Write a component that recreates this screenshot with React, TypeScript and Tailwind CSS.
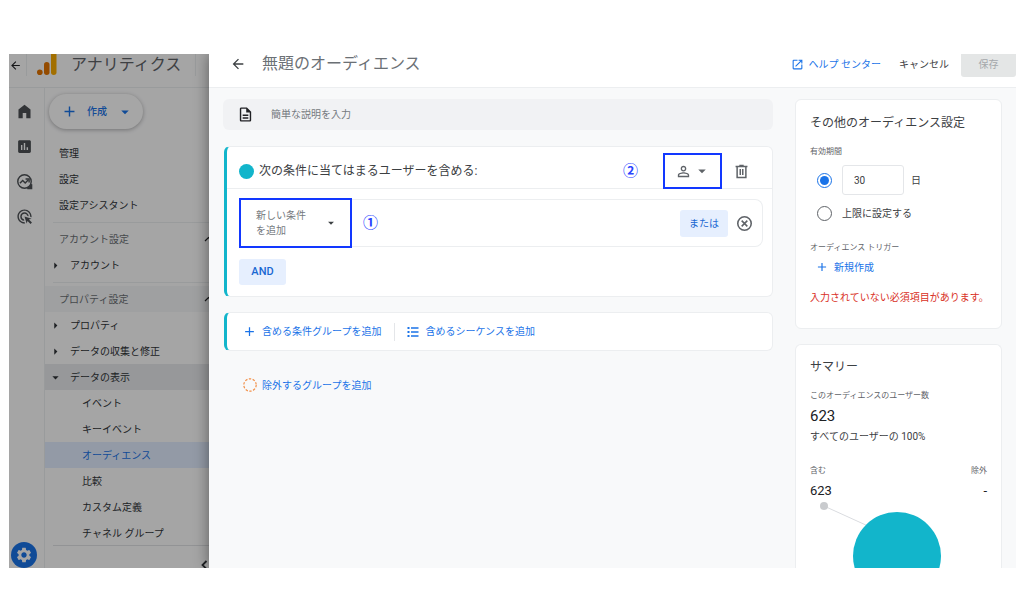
import { useState } from 'react';
import {
  MdAdd,
  MdAdsClick,
  MdArrowBack,
  MdArrowDropDown,
  MdArrowRight,
  MdAssessment,
  MdOpenInNew,
  MdOutlineDescription,
  MdPersonOutline,
  MdSettings,
} from 'react-icons/md';

const displayItems = [
  'イベント',
  'キーイベント',
  'オーディエンス',
  '比較',
  'カスタム定義',
  'チャネル グループ',
];

function Logo() {
  return (
    <svg width="20" height="22" viewBox="0 0 20 22" aria-hidden="true">
      <rect x="14" y="-2" width="5.5" height="23" rx="2.75" fill="#f9ab00" />
      <rect x="7" y="8" width="5.5" height="13" rx="2.75" fill="#e37400" />
      <circle cx="2.8" cy="18.2" r="2.8" fill="#e37400" />
    </svg>
  );
}

function HomeIcon() {
  return (
    <svg width="17" height="17" viewBox="0 0 24 24" fill="currentColor" aria-hidden="true">
      <path d="M3.5 21.5V9L12 2.5 20.500 9v12.500h-6v-7.500h-5v7.500z" />
    </svg>
  );
}

function ExploreIcon() {
  return (
    <svg width="17" height="17" viewBox="0 0 24 24" fill="none" stroke="currentColor" strokeWidth="2" aria-hidden="true">
      <circle cx="12" cy="12" r="9.5" />
      <path d="M16 22h6v-6c-1 3-3 5-6 6z" fill="currentColor" />
      <path d="M5.500 14.500l4-4 3.500 3.500 4.500-4.500" />
      <path d="M13.500 8.500h5v5" />
    </svg>
  );
}

function TrashIcon() {
  return (
    <svg width="15" height="15" viewBox="0 0 24 24" fill="none" stroke="currentColor" strokeWidth="2.4" aria-hidden="true">
      <path d="M2.500 4h19M8.500 2.500h7M5 4v17.500h14V4M10 8v9.500M14 8v9.500" />
    </svg>
  );
}

function RemoveIcon() {
  return (
    <svg width="17" height="17" viewBox="0 0 24 24" fill="none" stroke="currentColor" strokeWidth="2.2" aria-hidden="true">
      <circle cx="12" cy="12" r="9.500" />
      <path d="M8 8l8 8M16 8l-8 8" />
    </svg>
  );
}

function ListIcon() {
  return (
    <svg width="12" height="12" viewBox="0 0 12 12" fill="none" stroke="currentColor" aria-hidden="true">
      <path d="M4 2h7.500M4 6h7.500M4 10h7.500" strokeWidth="1.300" />
      <path d="M.5 2h2M.5 6h2M.5 10h2" strokeWidth="1.800" />
    </svg>
  );
}

function SectionTitle({ label, shaded }: { label: string; shaded?: boolean }) {
  return (
    <button
      type="button"
      className={`flex h-[26px] w-full items-center justify-between pl-[14px] text-[#6b7075] ${shaded ? 'bg-[#f5f6f7]' : ''}`}
    >
      {label}
      <svg width="9" height="6" viewBox="0 0 9 6" fill="none" stroke="#202124" strokeWidth="1.200" className="-mr-1 shrink-0" aria-hidden="true">
        <path d="M1 5l3.500-3.500L8 5" />
      </svg>
    </button>
  );
}

function TreeItem({ label, open }: { label: string; open?: boolean }) {
  const Arrow = open ? MdArrowDropDown : MdArrowRight;
  return (
    <button
      type="button"
      aria-expanded={!!open}
      className={`flex h-[26px] w-full items-center gap-[7px] pl-[3px] ${open ? 'bg-[#e8eaed]' : ''}`}
    >
      <Arrow size={15} />
      {label}
    </button>
  );
}

function Sidebar() {
  return (
    <div className="relative flex w-[200px] shrink-0 flex-col overflow-hidden bg-[#fdfdfe]">
      <div className="flex h-[34px] shrink-0 items-start border-b border-[#eceef0] text-[#202124]">
        <button type="button" aria-label="戻る" className="flex h-[22px] w-[18px] items-center border-r border-[#eceef0]">
          <MdArrowBack size={13} />
        </button>
        <div className="ml-[10px] flex flex-1 items-start gap-[14px]">
          <Logo />
          <span className="text-[16px] leading-[22px] text-[#5f6368]">アナリティクス</span>
        </div>
        <span className="mr-[13px] h-[22px] w-px bg-[#eceef0]" />
      </div>

      <div className="flex min-h-0 flex-1">
        <div className="flex w-9 shrink-0 flex-col items-center justify-between border-r border-[#eceef0] pt-[15px] text-[#4d5155]">
          <div className="flex flex-col items-center gap-[18px] pr-[5px]">
            <a href="#home" aria-label="ホーム"><HomeIcon /></a>
            <a href="#reports" aria-label="レポート"><MdAssessment size={17} /></a>
            <a href="#explore" aria-label="探索"><ExploreIcon /></a>
            <a href="#ads" aria-label="広告"><MdAdsClick size={17} /></a>
          </div>
          <a
            href="#admin"
            aria-label="管理"
            className="mr-[5px] flex size-[26px] items-center justify-center rounded-full bg-[#1a73e8] text-white"
          >
            <MdSettings size={18} />
          </a>
        </div>

        <nav className="flex min-w-0 flex-1 flex-col text-[10px] whitespace-nowrap text-[#303438]">
          <div className="min-h-0 flex-1 overflow-hidden">
            <button
              type="button"
              className="mt-[6px] ml-1 flex h-[35px] w-[94px] items-center rounded-full bg-white pl-3 font-medium text-[#1a73e8] shadow-[0_1px_4px_rgba(0,0,0,0.3)]"
            >
              <MdAdd size={17} />
              <span className="ml-[9px]">作成</span>
              <MdArrowDropDown size={18} className="ml-[9px]" />
            </button>

            <div className="mt-[11px]">
              {['管理', '設定', '設定アシスタント'].map((label) => (
                <a key={label} href="#settings" className="flex h-[26px] items-center pl-[14px]">
                  {label}
                </a>
              ))}
            </div>

            <div className="mt-1 ml-2 border-t border-[#eceef0]" />
            <div className="mt-[3px]">
              <SectionTitle label="アカウント設定" />
              <TreeItem label="アカウント" />
            </div>

            <div className="mt-1 ml-2 border-t border-[#eceef0]" />
            <div className="mt-[3px]">
              <SectionTitle label="プロパティ設定" shaded />
              <TreeItem label="プロパティ" />
              <TreeItem label="データの収集と修正" />
              <TreeItem label="データの表示" open />
              {displayItems.map((label) => (
                <a
                  key={label}
                  href="#display"
                  className={`flex h-[26px] items-center pl-[37px] ${label === 'オーディエンス' ? 'bg-[#e2edff] text-[#1a73e8]' : ''}`}
                >
                  {label}
                </a>
              ))}
            </div>
          </div>
          <div className="ml-2 flex h-[23px] shrink-0 justify-end border-t border-[#e0e2e5] pt-[14px]">
            <button type="button" aria-label="折りたたむ" className="h-[9px] pr-[1px]">
              <svg width="7" height="10" viewBox="0 0 7 10" fill="none" stroke="currentColor" strokeWidth="1.800" aria-hidden="true">
                <path d="M5.500 1L1.500 5l4 4" />
              </svg>
            </button>
          </div>
        </nav>
      </div>

      {/* scrim behind the open drawer */}
      <div className="pointer-events-none absolute inset-0 bg-black/35" />
    </div>
  );
}

function ConditionCard() {
  return (
    <section className="mt-4 ml-px rounded-[6px] border border-l-3 border-[#eceef0] border-l-[#12b5cb] bg-white">
      <div className="flex h-[42px] items-center border-b border-[#eceef0] pt-[7px] pr-[23px] pl-3">
        <span className="size-[15px] shrink-0 rounded-full bg-[#12b5cb]" />
        <h2 className="ml-[5px] flex-1 text-[12px] text-[#3c4043]">次の条件に当てはまるユーザーを含める:</h2>
        <span className="text-[15px] font-bold text-[#2a44ff]">②</span>
        <button
          type="button"
          aria-label="範囲"
          className="ml-[25px] flex h-9 w-[59px] items-center justify-center gap-[1px] border-2 border-[#1238ff] text-[#5f6368]"
        >
          <MdPersonOutline size={17} />
          <MdArrowDropDown size={18} />
        </button>
        <button type="button" aria-label="削除" className="ml-3 text-[#5f6368]">
          <TrashIcon />
        </button>
      </div>

      <div className="pt-[9px] pr-[9px] pb-[11px] pl-3">
        <div className="flex h-[50px] items-center">
          <button
            type="button"
            className="flex h-[50px] w-[113px] shrink-0 items-center justify-between border-2 border-[#1238ff] bg-white pr-[12px] pl-[15px] text-left text-[10px] leading-[15px] text-[#757a80]"
          >
            <span>
              新しい条件
              <br />
              を追加
            </span>
            <MdArrowDropDown size={14} className="text-[#3c4043]" />
          </button>
          <div className="flex h-12 flex-1 items-center rounded-r-[8px] border border-l-0 border-[#eceef0] pr-[9px] pl-[11px]">
            <span className="flex-1 text-[15px] font-bold text-[#2a44ff]">①</span>
            <button type="button" className="h-[27px] w-12 rounded-[3px] bg-[#e6effe] text-[10px] text-[#1967d2]">
              または
            </button>
            <button type="button" aria-label="条件を削除" className="ml-2 text-[#5f6368]">
              <RemoveIcon />
            </button>
          </div>
        </div>
        <button type="button" className="mt-[11px] block h-[26px] w-[47px] rounded-[3px] bg-[#e6effe] text-[11px] font-medium text-[#1967d2]">
          AND
        </button>
      </div>
    </section>
  );
}

function AudienceSettings() {
  const [duration, setDuration] = useState('days');
  const [days, setDays] = useState('30');
  const radio =
    'size-[15px] shrink-0 appearance-none rounded-full border border-[#5f6368] bg-clip-content p-[2px] checked:border-[#1a73e8] checked:bg-[#1a73e8]';

  return (
    <section className="h-[230px] shrink-0 rounded-[6px] border border-[#eceef0] bg-white px-[14px] pt-3 text-[10px] text-[#3c4043]">
      <h2 className="text-[12px] leading-[22px] whitespace-nowrap">その他のオーディエンス設定</h2>
      <fieldset>
        <legend className="pt-[11px] text-[8px] leading-[14px] text-[#5f6368]">有効期間</legend>
        <div className="mt-[6px] flex h-[30px] items-center pl-[7px]">
          <input
            type="radio"
            name="duration"
            id="duration-days"
            aria-label="日数"
            className={radio}
            checked={duration === 'days'}
            onChange={() => setDuration('days')}
          />
          <input
            type="text"
            id="days"
            value={days}
            onChange={(e) => setDays(e.target.value)}
            className="ml-[10px] h-[30px] w-[62px] rounded-[3px] border border-[#e4e6e9] px-[11px]"
          />
          <label htmlFor="days" className="ml-[7px]">日</label>
        </div>
        <div className="mt-2 flex h-5 items-center pl-[7px]">
          <input
            type="radio"
            name="duration"
            id="duration-max"
            className={radio}
            checked={duration === 'max'}
            onChange={() => setDuration('max')}
          />
          <label htmlFor="duration-max" className="ml-[10px]">上限に設定する</label>
        </div>
      </fieldset>
      <h3 className="mt-[18px] text-[8px] leading-[14px] text-[#5f6368]">オーディエンス トリガー</h3>
      <button type="button" className="mt-[4px] flex h-4 items-center gap-[5px] pl-[5px] text-[#1a73e8]">
        <MdAdd size={14} />
        新規作成
      </button>
      <p className="mt-[15px] leading-4 whitespace-nowrap text-[#d93025]">入力されていない必須項目があります。</p>
    </section>
  );
}

function Summary() {
  return (
    <section className="mt-[15px] min-h-[224px] flex-1 rounded-t-[6px] border border-b-0 border-[#eceef0] bg-white px-[14px] pt-3 text-[10px] text-[#5f6368]">
      <h2 className="text-[12px] leading-5 text-[#3c4043]">サマリー</h2>
      <p className="mt-3 text-[8px] leading-[14px]">このオーディエンスのユーザー数</p>
      <p className="mt-[3px] text-[15px] leading-5 text-[#202124]">623</p>
      <p className="mt-px leading-5 text-[#3c4043]">すべてのユーザーの 100%</p>
      <div className="mt-[17px] flex justify-between">
        <div>
          <p className="text-[8px] leading-[14px]">含む</p>
          <p className="mt-[3px] text-[13px] leading-5 text-[#202124]">623</p>
        </div>
        <div className="text-right">
          <p className="text-[8px] leading-[14px]">除外</p>
          <p className="mt-[3px] text-[13px] leading-5 text-[#202124]">-</p>
        </div>
      </div>
      <svg width="177" height="102" viewBox="0 0 177 102" className="block" aria-hidden="true">
        <path d="M14 5l44 20" stroke="#dadce0" strokeWidth="1" />
        <circle cx="14" cy="5" r="4" fill="#c9cbce" />
        <circle cx="87" cy="55" r="44" fill="#12b5cb" />
      </svg>
    </section>
  );
}

export default function App() {
  return (
    <div className="flex h-screen flex-col bg-white pt-[54px] pr-2 pb-[46px] pl-[9px] font-['Roboto','Noto_Sans_CJK_JP',sans-serif]">
      <div className="flex min-h-0 flex-1 overflow-hidden">
        <Sidebar />

        <main className="relative flex min-w-0 flex-1 flex-col bg-[#f8f9fa] shadow-[0_0_14px_rgba(0,0,0,0.45)]">
          <header className="flex h-[34px] shrink-0 items-start border-b border-[#eceef0] bg-white pl-[21px] text-[10px]">
            <button type="button" aria-label="戻る" className="flex h-5 items-center text-[#3c4043]">
              <MdArrowBack size={16} />
            </button>
            <h1 className="ml-[16px] flex-1 text-[16px] leading-5 text-[#6b7075]">無題のオーディエンス</h1>
            <a href="#help" className="flex h-5 items-center gap-[5px] text-[#1a73e8]">
              <MdOpenInNew size={13} />
              ヘルプ センター
            </a>
            <button type="button" className="ml-[18px] h-5 text-[#3c4043]">
              キャンセル
            </button>
            <button type="button" disabled className="ml-3 h-[23px] w-[55px] rounded-b-[3px] bg-[#e4e6e6] pb-[3px] text-[#a5a8ab]">
              保存
            </button>
          </header>

          <div className="flex min-h-0 flex-1 gap-[22px] overflow-hidden px-[14px] pt-[11px]">
            <div className="min-w-0 flex-1">
              <label className="flex h-[31px] items-center rounded-[6px] bg-[#f1f2f4] pl-[14px] text-[#202124]">
                <MdOutlineDescription size={17} />
                <input
                  type="text"
                  aria-label="説明"
                  placeholder="簡単な説明を入力"
                  className="ml-[17px] flex-1 bg-transparent text-[10px] outline-none placeholder:text-[#757a80]"
                />
              </label>

              <ConditionCard />

              <div className="mt-[15px] ml-px flex h-[39px] items-center rounded-[6px] border border-l-3 border-[#eceef0] border-l-[#12b5cb] bg-white pl-[15px] text-[10px] text-[#1a73e8]">
                <button type="button" className="flex items-center gap-[5px]">
                  <MdAdd size={15} />
                  含める条件グループを追加
                </button>
                <span className="mr-[12px] ml-[13px] h-[18px] w-px bg-[#e4e6e9]" />
                <button type="button" className="flex items-center gap-[6px]">
                  <ListIcon />
                  含めるシーケンスを追加
                </button>
              </div>

              <button type="button" className="mt-[26px] ml-5 flex h-4 items-center gap-[5px] text-[10px] text-[#1a73e8]">
                <svg width="14" height="14" viewBox="0 0 14 14" fill="none" aria-hidden="true">
                  <circle cx="7" cy="7" r="6.200" stroke="#f29049" strokeWidth="1.200" strokeDasharray="2.400 1.500" />
                </svg>
                除外するグループを追加
              </button>
            </div>

            <aside className="flex w-[207px] shrink-0 flex-col">
              <AudienceSettings />
              <Summary />
            </aside>
          </div>
        </main>
      </div>
    </div>
  );
}
